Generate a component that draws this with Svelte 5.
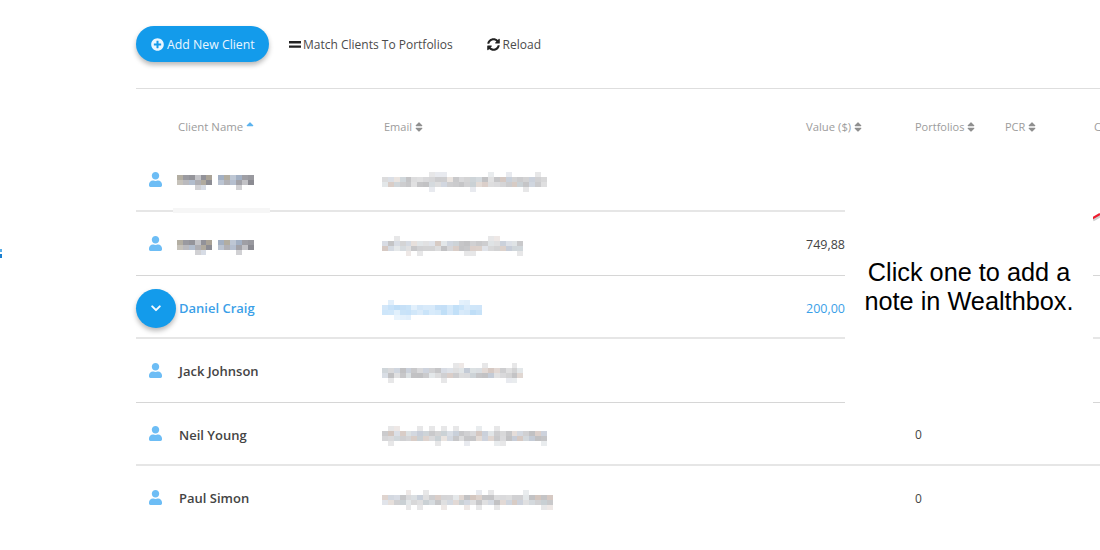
<script>
  const USER = "M224 256c70.7 0 128-57.3 128-128S294.7 0 224 0 96 57.3 96 128s57.3 128 128 128zm89.6 32h-16.7c-22.2 10.2-46.9 16-72.9 16s-50.6-5.8-72.9-16h-16.7C60.2 288 0 348.2 0 422.4V464c0 26.5 21.5 48 48 48h352c26.5 0 48-21.5 48-48v-41.6c0-74.2-60.2-134.4-134.4-134.4z";
  const SORT_UP = "M296 183L177 64c-9.4-9.4-24.6-9.4-33.9 0L24 183c-15.1 15.1-4.4 41 17 41h238c21.4 0 32.1-25.9 17-41z";
  const SORT = "M41 288h238c21.4 0 32.1 25.9 17 41L177 448c-9.4 9.4-24.6 9.4-33.9 0L24 329c-15.1-15.1-4.4-41 17-41zm255-105L177 64c-9.4-9.4-24.6-9.4-33.9 0L24 183c-15.1 15.1-4.4 41 17 41h238c21.4 0 32.1-25.9 17-41z";

  // Deterministic stand-in for the pixelated (redacted) text of the reference.
  function mosaic(seed, cols, palette, strength, gap = -1) {
    let s = seed;
    const next = () => (s = (s * 9301 + 49297) % 233280) / 233280;
    const cells = [];
    for (let r = 0; r < 4; r++) {
      for (let c = 0; c < cols; c++) {
        const v = next();
        const pick = next();
        const edge = r === 0 || r === 3;
        let a = edge ? (v > 0.84 ? strength * 0.45 : 0) : strength * (0.55 + v * 0.6);
        if (c === gap) a = 0;
        const col = palette[Math.floor(pick * palette.length)];
        cells.push(`rgba(${col},${a.toFixed(2)})`);
      }
    }
    return cells;
  }

  const GREY = ["120,120,125", "120,120,125", "120,120,125", "125,140,165", "160,130,115", "135,150,160"];
  const DARK = ["90,90,100", "90,90,100", "120,110,90", "110,130,160"];
  const BLUE = ["90,170,235", "120,185,240", "70,155,230"];

  const rows = [
    { id: 1, nameSeed: 11, emailSeed: 21, emailCols: 28, line: "thick" },
    { id: 2, nameSeed: 11, emailSeed: 34, emailCols: 24, value: "749,88", line: "thin" },
    { id: 3, name: "Daniel Craig", emailSeed: 57, emailCols: 17, value: "200,00", active: true, line: "thick" },
    { id: 4, name: "Jack Johnson", emailSeed: 76, emailCols: 24, line: "thin" },
    { id: 5, name: "Neil Young", emailSeed: 91, emailCols: 28, count: "0", line: "thick" },
    { id: 6, name: "Paul Simon", emailSeed: 102, emailCols: 29, count: "0", line: "none" }
  ];
</script>

<main class="page">
  <div class="toolbar">
    <button class="add">
      <svg class="ic13" viewBox="0 0 512 512"><path fill="currentColor" d="M256 8C119 8 8 119 8 256s111 248 248 248 248-111 248-248S393 8 256 8zm144 276c0 6.6-5.4 12-12 12h-92v92c0 6.6-5.4 12-12 12h-56c-6.6 0-12-5.4-12-12v-92h-92c-6.6 0-12-5.4-12-12v-56c0-6.6 5.4-12 12-12h92v-92c0-6.6 5.4-12 12-12h56c6.6 0 12 5.4 12 12v92h92c6.6 0 12 5.4 12 12v56z"/></svg>
      Add New Client
    </button>
    <button class="plain match">
      <svg class="eq" viewBox="0 0 12 7"><path fill="currentColor" d="M0 0h12v2.4H0zM0 4.4h12v2.4H0z"/></svg>
      Match Clients To Portfolios
    </button>
    <button class="plain reload">
      <svg class="ic13" viewBox="0 0 512 512"><path fill="currentColor" d="M370.72 133.28C339.458 104.008 298.888 87.962 255.848 88c-77.458.068-144.328 53.178-162.791 126.85-1.344 5.363-6.122 9.15-11.651 9.15H24.103c-7.498 0-13.194-6.807-11.807-14.176C33.933 94.924 134.813 8 256 8c66.448 0 126.791 26.136 171.315 68.685L463.03 40.97C478.149 25.851 504 36.559 504 57.941V192c0 13.255-10.745 24-24 24H345.941c-21.382 0-32.09-25.851-16.971-40.971l41.75-41.749zM32 296h134.059c21.382 0 32.09 25.851 16.971 40.971l-41.75 41.75c31.262 29.273 71.835 45.319 114.876 45.28 77.418-.07 144.315-53.144 162.787-126.849 1.344-5.363 6.122-9.15 11.651-9.15h57.304c7.498 0 13.194 6.807 11.807 14.176C478.067 417.076 377.187 504 256 504c-66.448 0-126.791-26.136-171.315-68.685L48.97 471.03C33.851 486.149 8 475.441 8 454.059V320c0-13.255 10.745-24 24-24z"/></svg>
      Reload
    </button>
  </div>

  <div class="row head">
    <div></div>
    <div class="th wide">Client Name <svg class="sort" viewBox="0 0 320 512"><path fill="#5cb3ee" d={SORT_UP}/></svg></div>
    <div class="th">Email <svg class="sort" viewBox="0 0 320 512"><path fill="#8f8f8f" d={SORT}/></svg></div>
    <div class="th val">Value ($) <svg class="sort" viewBox="0 0 320 512"><path fill="#8f8f8f" d={SORT}/></svg></div>
    <div class="th">Portfolios <svg class="sort" viewBox="0 0 320 512"><path fill="#8f8f8f" d={SORT}/></svg></div>
    <div class="th">PCR <svg class="sort" viewBox="0 0 320 512"><path fill="#8f8f8f" d={SORT}/></svg></div>
    <div class="th">C</div>
  </div>

  {#each rows as r (r.id)}
    <div class="row body {r.line}" class:active={r.active}>
      <div class="lead">
        {#if r.active}
          <button class="toggle" aria-label="Collapse">
            <svg viewBox="0 0 12 8" width="10" height="7"><path d="M1.5 1.5 6 6l4.5-4.5" fill="none" stroke="currentColor" stroke-width="2.4" stroke-linecap="round" stroke-linejoin="round"/></svg>
          </button>
        {:else}
          <svg class="user" viewBox="0 0 448 512"><path fill="#6dbdf5" d={USER}/></svg>
        {/if}
      </div>
      <div class="name">
        {#if r.name}
          {r.name}
        {:else}
          <span class="mosaic" style="grid-template-columns: repeat(13, 5.9px)">
            {#each mosaic(r.nameSeed, 13, DARK, 0.62, 6) as c}<i style="background:{c}"></i>{/each}
          </span>
        {/if}
      </div>
      <div class="email">
        <span class="mosaic" style="grid-template-columns: repeat({r.emailCols}, 5.9px)">
          {#each mosaic(r.emailSeed, r.emailCols, r.active ? BLUE : GREY, r.active ? 0.36 : 0.4) as c}<i style="background:{c}"></i>{/each}
        </span>
      </div>
      <div class="value">{r.value ?? ""}</div>
      <div class="count">{r.count ?? ""}</div>
      <div></div>
      <div></div>
    </div>
  {/each}

  <div class="smudge"></div>

  <div class="note">
    <p>Click one to add a<br />note in Wealthbox.</p>
  </div>

  <div class="arrow">
    <svg viewBox="0 0 7 20" width="7" height="20"><path d="M0 13.5 L7 9.5" stroke="#cfcfcf" stroke-width="3" fill="none" transform="translate(0 1.5)"/><path d="M-1 13.5 L7 9" stroke="#ee1c2e" stroke-width="2.2" fill="none"/></svg>
  </div>
  <div class="edge"></div>
</main>

<style>
  :global(body) {
    margin: 0;
    background: #fff;
    font-family: "Open Sans", "Liberation Sans", sans-serif;
    overflow: hidden;
  }
  .page {
    position: relative;
    width: 1100px;
    height: 550px;
    overflow: hidden;
    padding-left: 136px;
    box-sizing: border-box;
  }
  .toolbar {
    box-sizing: border-box;
    height: 89px;
    padding-top: 26px;
    display: flex;
    align-items: flex-start;
    border-bottom: 1px solid #dedede;
  }
  button {
    font: inherit;
    border: 0;
    background: none;
    padding: 0;
    display: inline-flex;
    align-items: center;
    cursor: pointer;
  }
  .add {
    width: 133px;
    height: 36px;
    box-sizing: border-box;
    padding-left: 15px;
    border-radius: 18px;
    background: #139beb;
    color: #eaf6ff;
    font-size: 12.3px;
    gap: 3px;
    box-shadow: 0 3px 5px rgba(0, 0, 0, 0.28);
  }
  .ic13 { width: 13px; height: 13px; flex: none; }
  .eq { width: 12px; height: 7px; flex: none; }
  .plain {
    height: 36px;
    font-size: 12px;
    color: #4b4b4b;
    gap: 2px;
  }
  .plain svg { color: #222; }
  .match { margin-left: 20px; }
  .reload { margin-left: 34px; gap: 3px; }

  .row {
    display: grid;
    grid-template-columns: 42px 206px 422px 109px 90px 89px 1fr;
    align-items: center;
    width: 964px;
  }
  .head {
    box-sizing: border-box;
    height: 59.4px;
    padding-top: 16.6px;
  }
  .th {
    font-size: 11px;
    color: #9c9c9c;
    white-space: nowrap;
    display: flex;
    align-items: center;
    gap: 3px;
  }
  .th.wide { font-size: 11.4px; }
  .th.val { font-size: 11.3px; }
  .sort { width: 8px; height: 12px; flex: none; }
  .body {
    height: 63.6px;
    box-sizing: border-box;
    color: #3f3f46;
  }
  .thick { border-bottom: 2px solid #e6e6e6; padding-top: 2px; }
  .thin { border-bottom: 1px solid #d6d6d6; padding-top: 2px; }
  .active { padding-top: 4px; }
  .lead { display: flex; }
  .user { width: 13px; height: 15px; margin-left: 13px; margin-top: -2px; }
  .toggle {
    width: 40px;
    height: 39px;
    border-radius: 50%;
    background: #139beb;
    color: #f2faff;
    justify-content: center;
    box-shadow: 0 3px 5px rgba(0, 0, 0, 0.28);
  }
  .name {
    font-size: 13px;
    font-weight: 600;
    color: #444;
    padding-left: 1px;
  }
  .active .name { color: #3b9fe8; }
  .active .value { color: #3b9fe8; }
  .value { color: #444; font-size: 12.5px; }
  .count { color: #444; font-size: 12px; }
  .mosaic {
    display: inline-grid;
    grid-auto-rows: 5px;
    vertical-align: middle;
    filter: blur(0.7px);
  }
  .mosaic i { display: block; }
  .name .mosaic { margin-left: -2px; }
  .email .mosaic { margin-left: -2px; }

  .smudge {
    position: absolute;
    left: 173px;
    top: 208px;
    width: 97px;
    height: 5px;
    background: #f6f6f6;
  }
  .note {
    position: absolute;
    left: 845px;
    top: 205px;
    width: 248px;
    height: 199px;
    background: #fff;
    color: #000;
    font-family: "Liberation Sans", Arial, sans-serif;
    font-size: 25.3px;
    line-height: 29px;
    text-align: center;
  }
  .note p { margin: 53px 0 0; }
  .arrow {
    position: absolute;
    left: 1093px;
    top: 205px;
    width: 7px;
    height: 20px;
    background: #fff;
  }
  .arrow svg { display: block; }
  .edge {
    position: absolute;
    left: 0;
    top: 249px;
    width: 2px;
    height: 9px;
    background: linear-gradient(#5aaee8 0 3px, #fff 3px 5px, #1a7fd0 5px);
  }
</style>
